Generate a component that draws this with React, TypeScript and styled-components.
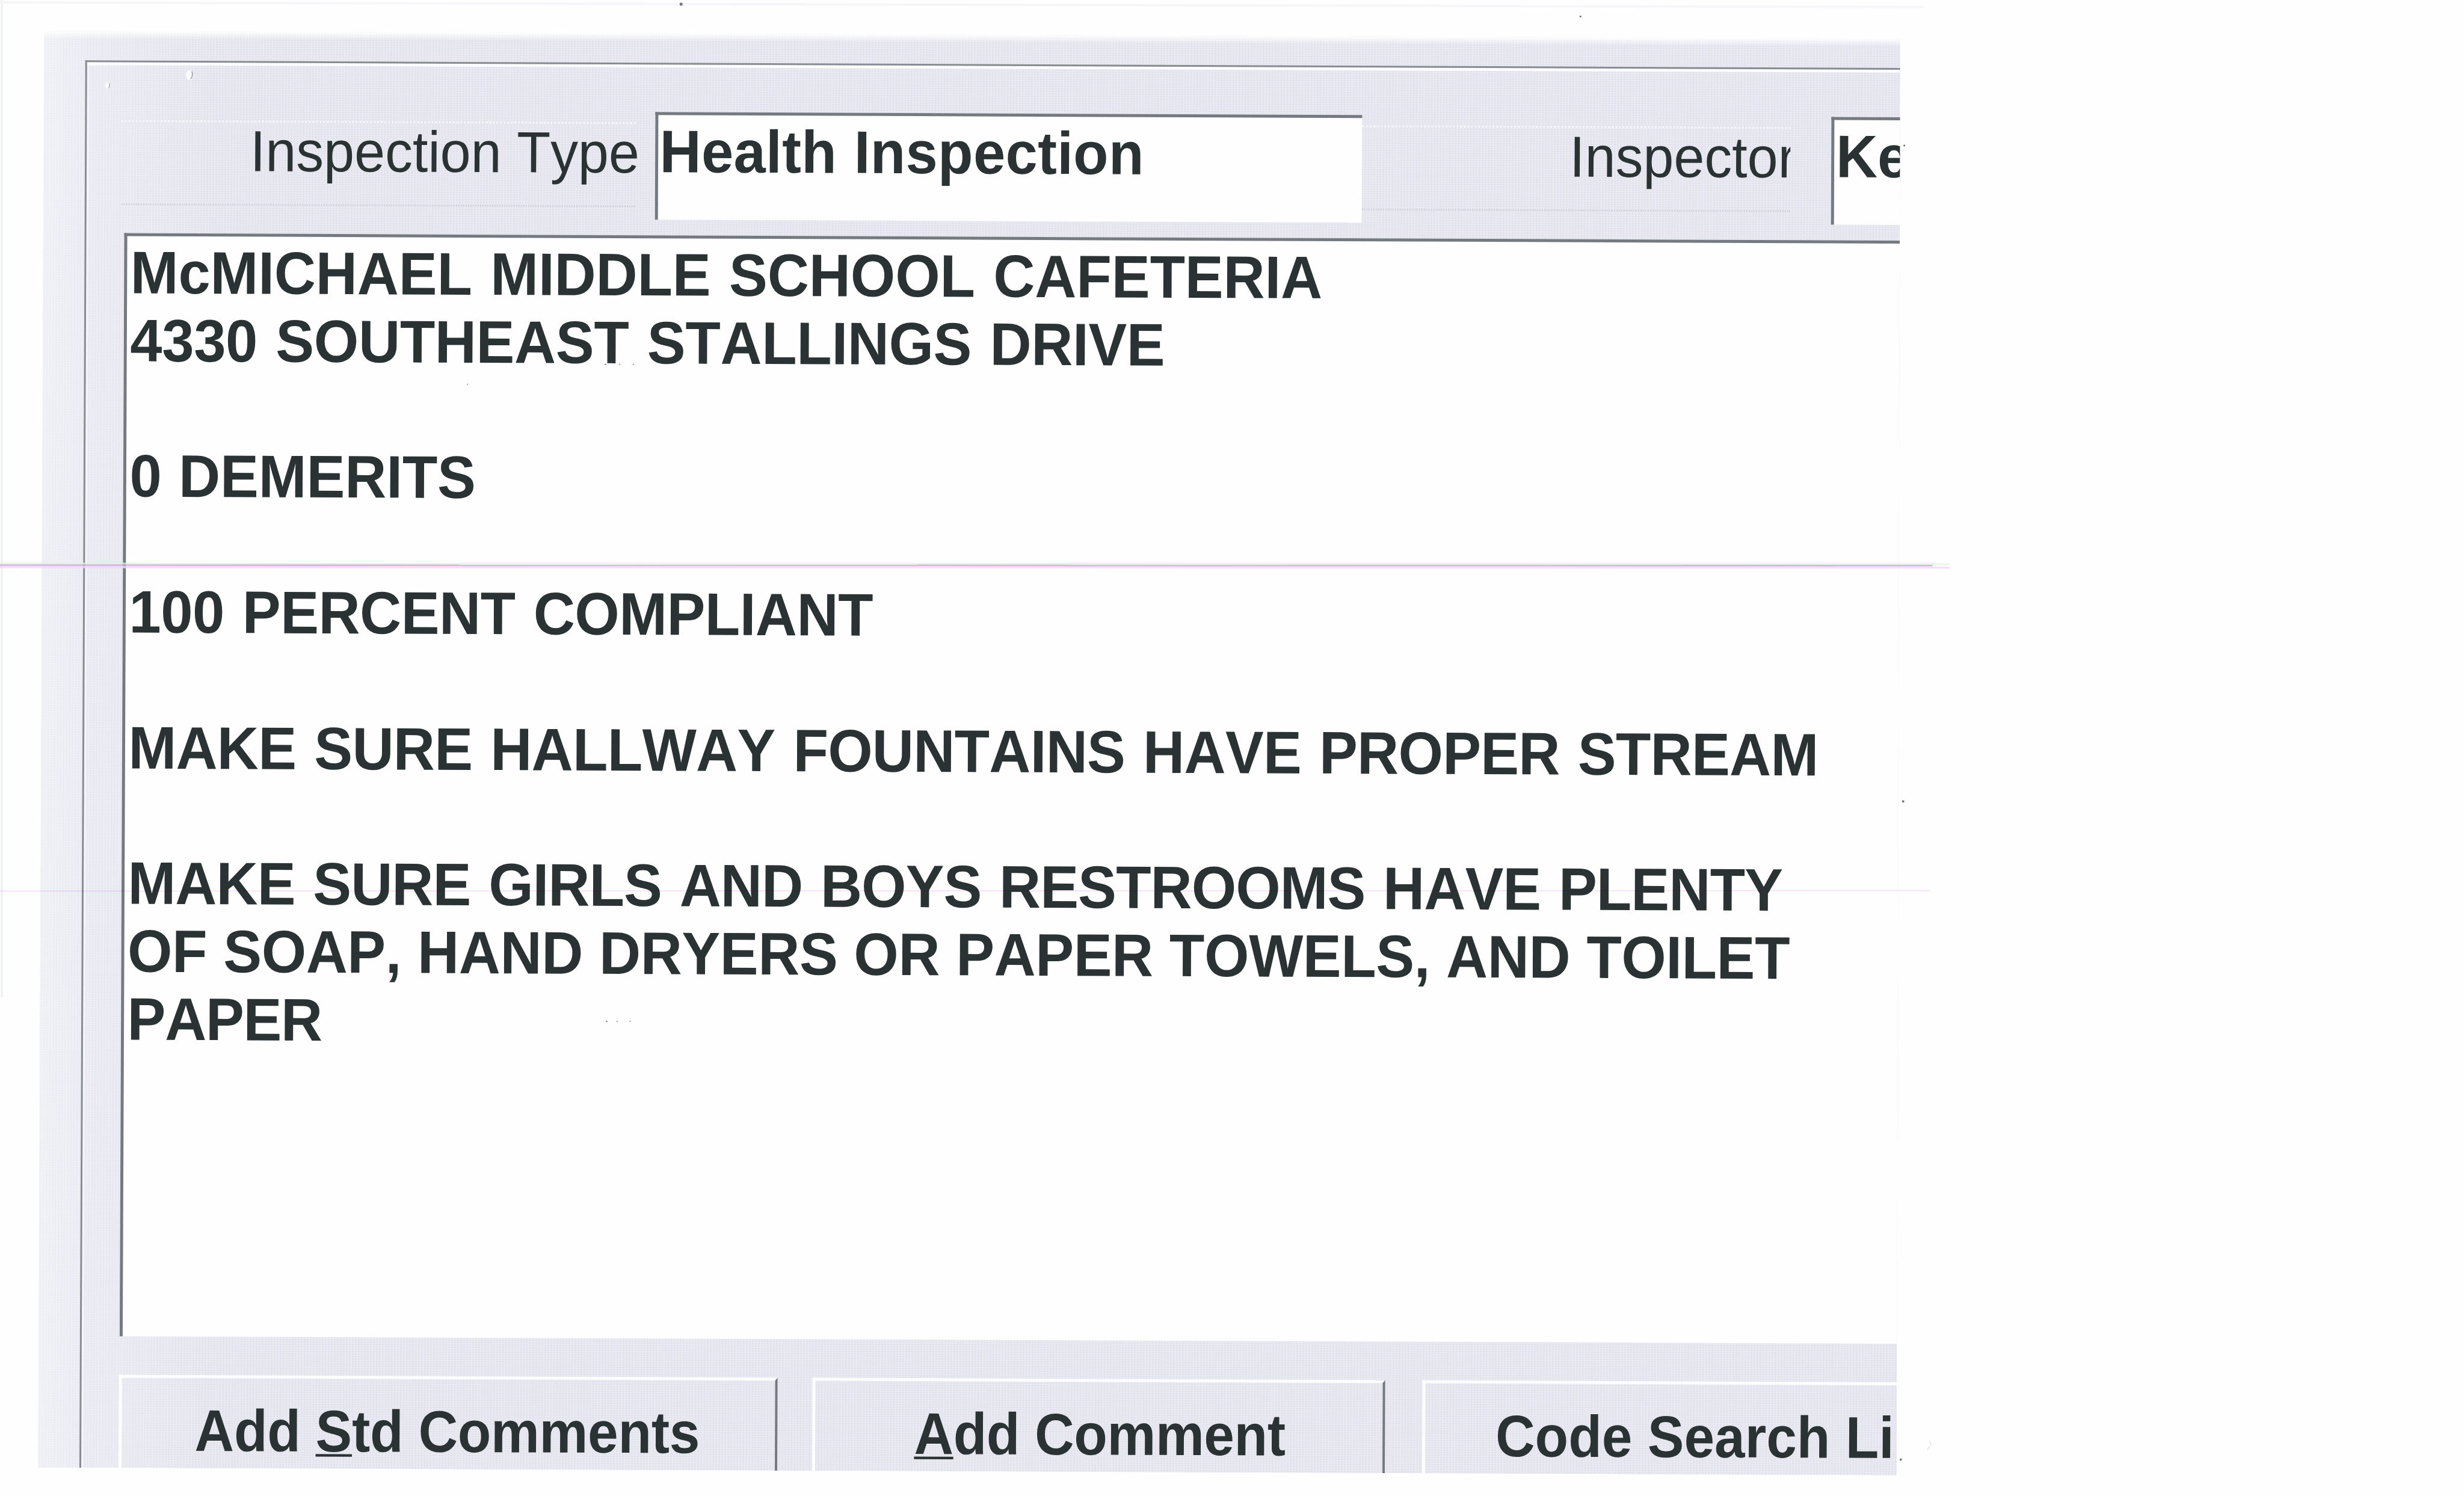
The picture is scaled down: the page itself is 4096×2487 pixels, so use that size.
import React from 'react';
import styled, { createGlobalStyle, css } from 'styled-components';

const SCALE = 0.975;
const u = (n: number) => `${+(n * SCALE).toFixed(3)}px`;

const INK = '#2b3233';
const SHADOW = '#747a80';

const GlobalStyle = createGlobalStyle`
  html, body { margin: 0; padding: 0; background: #fefefe; }
  * { box-sizing: border-box; }
`;

const Page = styled.main`
  position: relative;
  width: 4096px;
  height: 2487px;
  overflow: hidden;
  padding: ${u(52.5)} 0 0 ${u(75)};
  background: #fefefe;
  color: ${INK};
  font-family: 'Liberation Sans', Arial, sans-serif;
  font-kerning: none;
`;

const Window = styled.section`
  width: ${u(3171)};
  height: ${u(2450)};
  overflow: hidden;
  padding: ${u(50.5)} 0 0 ${u(71)};
  clip-path: polygon(0 0, ${u(3165)} 0, ${u(3169)} 100%, 0 100%);
  transform: rotate(0.24deg);
  transform-origin: 0 0;
  background:
    linear-gradient(180deg, #fefefe 0, rgba(254, 254, 254, 0) ${u(14)}),
    linear-gradient(90deg, rgba(250, 251, 255, 0.5) 0, rgba(250, 251, 255, 0.25) ${u(90)}, rgba(250, 251, 255, 0) ${u(300)}),
    radial-gradient(circle at 50% 50%, #d5d7e0 0, rgba(213, 215, 224, 0) 1.6px) 0 0 / 5px 4px,
    #e8e9f1;
`;

const Frame = styled.div`
  width: ${u(3300)};
  height: ${u(2600)};
  display: flex;
  flex-direction: column;
  border-top: ${u(4)} solid #888d92;
  border-left: ${u(4)} solid #888d92;
  box-shadow: inset 0 ${u(5)} 0 #fcfcff, inset ${u(3)} 0 0 #f4f5fa;
  padding: ${u(80.5)} 0 0 ${u(59)};
`;

const Header = styled.div`
  display: flex;
  align-items: flex-start;
  height: ${u(184)};
`;

const Label = styled.div<{ $width: number; $indent: number; $clip?: boolean }>`
  flex: none;
  width: ${(p) => u(p.$width)};
  height: ${u(144)};
  margin-top: ${u(18)};
  padding-left: ${(p) => u(p.$indent)};
  overflow: ${(p) => (p.$clip ? 'hidden' : 'visible')};
  border-top: 3px dotted #f6f7fb;
  border-bottom: 2px dotted #c9cbd3;
`;

const LabelText = styled.span`
  display: block;
  margin-top: -2px;
  font-size: ${u(94)};
  line-height: ${u(105)};
  white-space: nowrap;
  transform: scaleY(1.05);
  transform-origin: 0 ${u(85)};
`;

const sunken = css`
  border-top: ${u(6)} solid ${SHADOW};
  border-left: ${u(6)} solid ${SHADOW};
  background: #fefefe;
`;

const Field = styled.div<{ $width: number; $gap: number }>`
  ${sunken}
  flex: none;
  width: ${(p) => u(p.$width)};
  height: ${u(184)};
  margin-left: ${(p) => u(p.$gap)};
  padding: ${u(9.5)} 0 0 ${u(3)};
`;

const BoldLine = styled.div<{ $spacing?: number; $word?: number }>`
  height: ${u(115.7)};
  font-size: ${u(98)};
  font-weight: 700;
  line-height: ${u(115.7)};
  letter-spacing: ${(p) => p.$spacing ?? 0}px;
  word-spacing: ${(p) => p.$word ?? 0}px;
  white-space: nowrap;
  transform: scaleY(1.045);
  transform-origin: 0 ${u(91.8)};
`;

const FieldText = styled(BoldLine)`
  line-height: ${u(109.5)};
  transform-origin: 0 ${u(88.7)};
`;

const Memo = styled.div`
  ${sunken}
  flex: none;
  height: ${u(1881)};
  margin: ${u(27)} 0 0 ${u(5.6)};
  padding: ${u(5.7)} 0 0 ${u(5.6)};
`;

const Buttons = styled.div`
  display: flex;
  margin: ${u(65)} 0 0 ${u(4.5)};
`;

const Button = styled.div<{ $width: number; $gap: number; $indent: number }>`
  flex: none;
  width: ${(p) => u(p.$width)};
  height: ${u(240)};
  margin-right: ${(p) => u(p.$gap)};
  padding: ${u(40.5)} 0 0 ${(p) => u(p.$indent - 6)};
  border-top: ${u(6)} solid #fdfdff;
  border-left: ${u(6)} solid #fdfdff;
  border-right: ${u(5)} solid ${SHADOW};
`;

const ButtonText = styled.span<{ $spacing?: number }>`
  display: block;
  font-size: ${u(93)};
  font-weight: 700;
  line-height: ${u(104)};
  letter-spacing: ${(p) => p.$spacing ?? 0}px;
  white-space: nowrap;
  transform: scaleY(1.078);
  transform-origin: 0 ${u(84.2)};
`;

const Mnemonic = styled.span`
  text-decoration: underline;
  text-decoration-thickness: 4px;
  text-underline-offset: 4px;
  text-decoration-skip-ink: none;
`;

const Marks = styled.svg`
  position: absolute;
  left: 0;
  top: 0;
  width: 4096px;
  height: 2487px;
  pointer-events: none;
`;

const Streak = styled.path`
  mix-blend-mode: multiply;
`;

const LINES: { text: string; spacing?: number; word?: number }[] = [
  { text: 'McMICHAEL MIDDLE SCHOOL CAFETERIA', spacing: 0, word: 4 },
  { text: '4330 SOUTHEAST STALLINGS DRIVE', spacing: -0.23, word: 4 },
  { text: '' },
  { text: '0 DEMERITS', word: 2 },
  { text: '' },
  { text: '100 PERCENT COMPLIANT', spacing: -0.4, word: 4 },
  { text: '' },
  { text: 'MAKE SURE HALLWAY FOUNTAINS HAVE PROPER STREAM', spacing: -0.62, word: 4 },
  { text: '' },
  { text: 'MAKE SURE GIRLS AND BOYS RESTROOMS HAVE PLENTY', spacing: -0.83, word: 4 },
  { text: 'OF SOAP, HAND DRYERS OR PAPER TOWELS, AND TOILET', spacing: -0.3, word: 0.8 },
  { text: 'PAPER', spacing: -1.2 },
];

const DOTS = [
  [1032, 621, 2], [1056, 621, 1.5], [1080, 621, 1.5], [797, 655, 1.5],
  [1034, 1741, 2], [1052, 1741, 1.5], [1074, 1741, 1.5],
  [3244, 1366, 3], [3246, 248, 2.5], [3240, 2488, 3], [1161, 7, 4], [2694, 28, 2.5],
];

export default function App() {
  return (
    <>
      <GlobalStyle />
      <Page>
        <Window>
          <Frame>
            <Header>
              <Label $width={876} $indent={219.5}>
                <LabelText>Inspection Type</LabelText>
              </Label>
              <Field $width={1206} $gap={33.6}>
                <FieldText $spacing={0.4} $word={2}>Health Inspection</FieldText>
              </Field>
              <Label $width={730} $indent={353.5} $clip>
                <LabelText>Inspector</LabelText>
              </Label>
              <Field $width={400} $gap={69.7}>
                <FieldText>Ke</FieldText>
              </Field>
            </Header>
            <Memo>
              {LINES.map((l, i) => (
                <BoldLine key={i} $spacing={l.spacing} $word={l.word}>{l.text}</BoldLine>
              ))}
            </Memo>
            <Buttons>
              <Button $width={1123} $gap={59} $indent={130.5}>
                <ButtonText $spacing={-0.1}>Add <Mnemonic>S</Mnemonic>td Comments</ButtonText>
              </Button>
              <Button $width={976.7} $gap={63.6} $indent={175}>
                <ButtonText $spacing={-0.2}><Mnemonic>A</Mnemonic>dd Comment</ButtonText>
              </Button>
              <Button $width={1000} $gap={0} $indent={126}>
                <ButtonText $spacing={0.2}>Code Search Li</ButtonText>
              </Button>
            </Buttons>
          </Frame>
        </Window>
        <Marks viewBox="0 0 4200 2550">
          <path d="M3 0V1700" stroke="#eceef7" strokeWidth="3" />
          <path d="M0 4L3280 12" stroke="#f6f6f8" strokeWidth="4" />
          <path d="M0 960.5L3323 961.5" stroke="#d9f5dc" strokeOpacity="0.8" strokeWidth="3" />
          <path d="M0 966.5L3323 967" stroke="#f6d6fa" strokeOpacity="0.85" strokeWidth="4" />
          <path d="M0 963.3L3294 964" stroke="#cfa6e2" strokeOpacity="0.85" strokeWidth="2.6" />
          <ellipse cx="322" cy="128" rx="5" ry="8" fill="#fbfbfd" />
          <path d="M327 122q3 6-2 12" stroke="#9a9ea6" strokeWidth="1.5" fill="none" />
          <ellipse cx="183" cy="146" rx="4" ry="5" fill="#fbfbfd" />
          <path d="M186 142q2 4-1 8" stroke="#a9adb4" strokeWidth="1.5" fill="none" />
          <path d="M3289 2456q4 6 0 10t-3 5" stroke="#e4e4e4" strokeWidth="1.5" fill="none" />
          {DOTS.map(([x, y, r], i) => (
            <circle key={i} cx={x} cy={y} r={r / 1.5} fill="#777b7e" />
          ))}
        </Marks>
        <Marks viewBox="0 0 4200 2550" style={{ mixBlendMode: 'multiply' }}>
          <Streak d="M0 1519L3290 1518" stroke="#f5e4f8" strokeWidth="2" />
        </Marks>
      </Page>
    </>
  );
}
